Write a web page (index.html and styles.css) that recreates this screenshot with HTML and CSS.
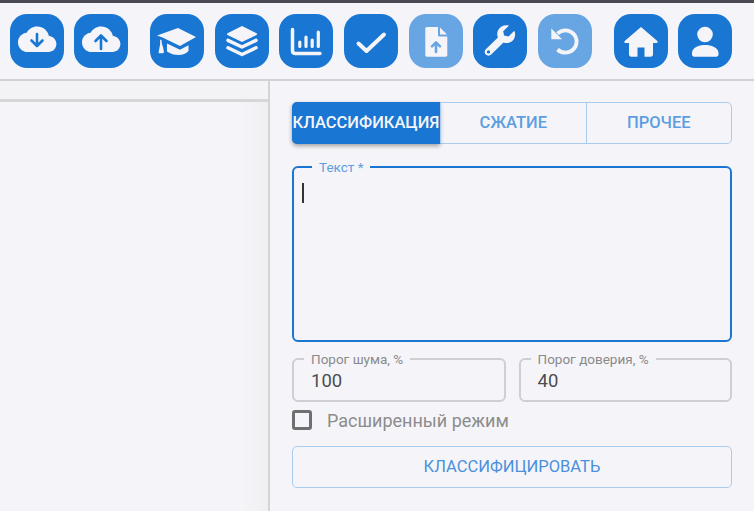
FILE: index.html
```html
<!DOCTYPE html>
<html lang="ru">
<head>
<meta charset="utf-8">
<title>Классификация</title>
<link rel="stylesheet" href="styles.css">
</head>
<body>
<div class="app">
  <div class="topline"></div>
  <header class="toolbar">
    <div class="group">
      <button class="tool"><svg viewBox="0 0 54 54"><path class="w" d="M38.96 22.06C37.87 16.54 33.02 12.4 27.2 12.4c-4.62 0-8.64 2.62-10.64 6.46C11.74 19.38 8 23.46 8 28.4c0 5.3 4.3 9.6 9.6 9.6h20.8c4.42 0 8-3.58 8-8 0-4.22-3.28-7.65-7.44-7.94z"/><path class="b" d="M27 20v12M21.5 26.5l5.5 5.5 5.5-5.5"/></svg></button>
      <button class="tool"><svg viewBox="0 0 54 54"><path class="w" d="M38.96 22.06C37.87 16.54 33.02 12.4 27.2 12.4c-4.62 0-8.64 2.62-10.64 6.46C11.74 19.38 8 23.46 8 28.4c0 5.3 4.3 9.6 9.6 9.6h20.8c4.42 0 8-3.58 8-8 0-4.22-3.28-7.65-7.44-7.94z"/><path class="b" d="M27 35V22M21.5 27l5.5-5.5 5.5 5.5"/></svg></button>
    </div>
    <div class="group">
      <button class="tool"><svg viewBox="0 0 54 54"><path class="w" d="M7 21.5L28 14l18 9-16 9-17.5-8.5z"/><path class="w" d="M17 29.5l13 6.2 8.5-4.4V37c-2.5 2.8-6 4-10 4s-8-1-11.500-3.500z"/><path class="w" d="M10 25.500l1.500.7c.3 3 .6 4.500 1.500 6.800l1 5.500c-1.500 1-4 1-5.500.5l1-5.500c.8-2.500.7-5 .5-8z"/></svg></button>
      <button class="tool"><svg viewBox="0 0 54 54"><path class="w" d="M27 12l14.500 7.300c.7.4.7 1.300 0 1.700L27 28 12.500 21c-.7-.4-.7-1.300 0-1.700z"/><path class="ws" d="M13 26.300l14 6.700 14-6.700M13 33.700L27 40.500l14-6.800"/></svg></button>
      <button class="tool"><svg viewBox="0 0 54 54"><path class="ws" d="M13.500 15.500v21c0 2 1 3 3 3h24.500"/><path class="ws thick" d="M20.800 28v4.500M27 23v9.500M33.200 26v6.500M39.300 18v14.500"/></svg></button>
      <button class="tool"><svg viewBox="0 0 54 54"><path class="ws check" d="M14.500 29.500l8 7.500 17.500-16.500"/></svg></button>
      <button class="tool off"><svg viewBox="0 0 54 54"><path class="w" d="M18 13h11v8c0 1 .6 1.600 1.600 1.600h7.700V41c0 1-.8 1.700-1.700 1.700H18c-1 0-1.700-.8-1.700-1.700V14.700c0-.9.700-1.700 1.700-1.700z"/><path class="w" d="M31 13.500l7 7h-7z"/><path class="b light" d="M27 38V28.500M23 32.300l4-4 4 4"/></svg></button>
      <button class="tool"><svg viewBox="0 0 54 54"><path class="w" d="M41.300 16.800l-5.800 5.700-4.400-.9-.9-4.400 5.800-5.600c-4.300-1-8.800.6-10.800 4.500-1.200 2.300-1.300 5-.3 7.300L12.800 35.200c-1.500 1.500-1.500 4 0 5.400s3.900 1.500 5.400 0l12.300-12.100c2.300.9 5 .8 7.300-.4 3.800-2 5.500-7.100 3.500-11.300z"/><circle class="hole" cx="15.500" cy="37.900" r="1.700"/></svg></button>
      <button class="tool off"><svg viewBox="0 0 54 54"><path class="ws ring" d="M19.500 19.600c2-2 4.800-3.300 7.900-3.300 6.200 0 11.200 5 11.200 11.200s-5 11.200-11.200 11.200c-3.100 0-5.900-1.300-7.900-3.200"/><path class="w" d="M13.300 14.500v10.800H24z"/></svg></button>
    </div>
    <div class="group">
      <button class="tool"><svg viewBox="0 0 54 54"><path class="w" d="M27 13L10.700 27c-.9.800-.4 2 .8 2H15v11.500c0 1.200 1 2.200 2.200 2.200h6.300V33.500h7v9.200h6.300c1.200 0 2.200-1 2.200-2.200V29h3.500c1.200 0 1.700-1.200.8-2z"/></svg></button>
      <button class="tool"><svg viewBox="0 0 54 54"><circle class="w" cx="27" cy="20.500" r="7.800"/><path class="w" d="M14 39c0-5.500 7-8 13-8s13.500 2.500 13.500 8v1.500c0 1.300-1 2.200-2.200 2.200H16.200c-1.200 0-2.200-.9-2.200-2.200z"/></svg></button>
    </div>
  </header>
  <main class="main">
    <section class="left"><div class="strip"></div></section>
    <section class="right">
      <div class="tabs">
        <button class="tab active">КЛАССИФИКАЦИЯ</button>
        <button class="tab">СЖАТИЕ</button>
        <button class="tab">ПРОЧЕЕ</button>
      </div>
      <fieldset class="field focus">
        <legend>Текст *</legend>
        <div class="caret"></div>
      </fieldset>
      <div class="pair">
        <fieldset class="field small"><legend>Порог шума, %</legend><span class="value">100</span></fieldset>
        <fieldset class="field small"><legend>Порог доверия, %</legend><span class="value">40</span></fieldset>
      </div>
      <label class="check"><span class="box"></span><span class="check-text">Расширенный режим</span></label>
      <button class="submit">КЛАССИФИЦИРОВАТЬ</button>
    </section>
  </main>
</div>
</body>
</html>
```
FILE: styles.css
```css
* { box-sizing: border-box; }
html, body { margin: 0; height: 100%; }
body { background: #f5f5f9; font-family: Roboto, "Liberation Sans", sans-serif; overflow: hidden; }
.app { width: 754px; height: 511px; display: flex; flex-direction: column; }
.topline { height: 3px; background: #4a4a55; flex: none; }
.toolbar { height: 78px; flex: none; display: flex; gap: 21.7px; padding: 11px 0 0 9.5px; border-bottom: 2px solid #d2d2d4; }
.group { display: flex; gap: 10.7px; }
.tool { width: 54px; height: 54px; border: 0; padding: 0; border-radius: 17px; background: #1976d2; display: block; }
.tool.off { background: #68a5e3; }
.tool svg { display: block; width: 54px; height: 54px; }
.w { fill: #f5f5f9; }
.b { fill: none; stroke: #1976d2; stroke-width: 2.600; stroke-linecap: round; stroke-linejoin: round; }
.b.light { stroke: #68a5e3; }
.ws { fill: none; stroke: #f5f5f9; stroke-width: 3.500; stroke-linecap: round; stroke-linejoin: round; }
.ws.thick { stroke-width: 3.200; }
.ws.check { stroke-width: 4; }
.ws.ring { stroke-width: 3.800; stroke-linecap: butt; }
.hole { fill: #1976d2; }
.main { flex: 1; display: flex; min-height: 0; }
.left { width: 270px; flex: none; border-right: 2px solid #d4d4d6; background: linear-gradient(90deg, #f5f5f9 90%, #efeff2 100%); }
.strip { height: 21px; border-bottom: 3px solid #d6d6d8; background: #f3f3f6; }
.right { flex: 1; display: flex; flex-direction: column; padding: 21px 22px 0 22px; }
.tabs { display: flex; height: 42px; border: 1px solid #a8cbee; border-radius: 5px; flex: none; }
.tab { background: none; border: 0; border-left: 1px solid #a8cbee; font: 500 16.500px/1 Roboto, sans-serif; color: #5e9ee0; padding: 0; flex: 1; white-space: nowrap; }
.tab:first-child { border-left: 0; }
.tab.active { flex: none; width: 148px; margin: -1px 0 -1px -1px; background: #1976d2; color: #f5f5f9; border-radius: 5px 0 0 5px; box-shadow: 0 2px 4px rgba(0,0,0,.35); font-size: 16.500px; }
.field { margin: 0; padding: 0; border: 1px solid #cfcfd1; border-radius: 6px; min-width: 0; }
.field legend { margin-left: 11px; padding: 0 7px; font-size: 13.500px; line-height: 14px; color: #8a8a8a; }
.field.focus { height: 182px; margin-top: 16px; border: 2px solid #1976d2; padding: 9px 0 0 8px; flex: none; }
.field.focus legend { color: #5e9ee0; margin-left: 10px; }
.caret { width: 2px; height: 20px; background: #333; }
.pair { display: flex; gap: 13px; margin-top: 10px; flex: none; }
.small { flex: 1; height: 50px; border-width: 2px; }
.small legend { margin-left: 10px; }
.value { display: block; padding: 4px 0 0 17px; font-size: 18.500px; line-height: 22px; color: #4d4d4d; }
.check { display: flex; align-items: center; gap: 15px; margin-top: 7px; height: 22px; flex: none; }
.box { width: 20px; height: 20px; border: 3px solid #6f6f72; border-radius: 3px; flex: none; }
.check-text { font-size: 18px; color: #8c8c8c; }
.submit { margin-top: 15px; height: 42px; flex: none; background: none; border: 1px solid #a8cbee; border-radius: 5px; font: 400 16.500px/1 Roboto, sans-serif; color: #4a90dc; }
```
